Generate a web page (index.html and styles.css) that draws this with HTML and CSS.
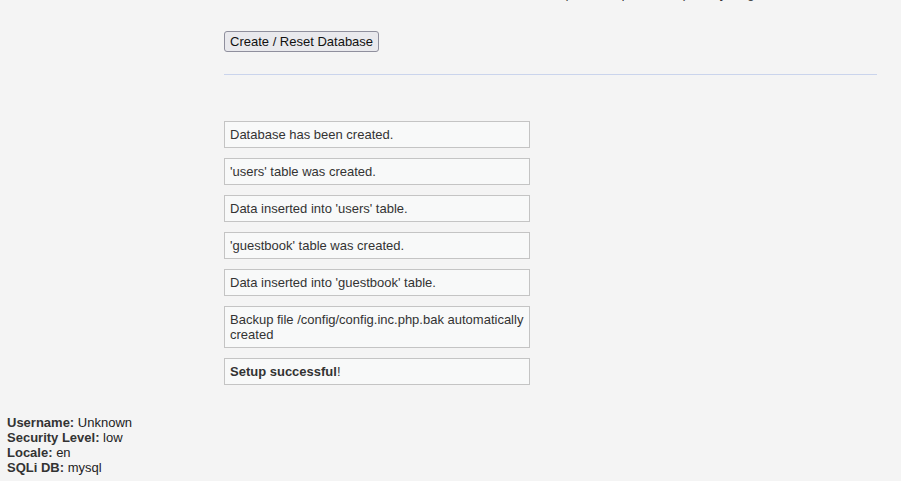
FILE: index.html
```html
<!DOCTYPE html>
<html>
<head>
<meta charset="utf-8">
<link rel="stylesheet" href="styles.css">
</head>
<body>
<div class="page">
  <div class="main">
    <p class="intro">You can also use this to reset the administrator credentials ("<em>admin</em> // <em>password</em>") at any stage.</p>
    <form class="form">
      <button type="button" class="btn">Create / Reset Database</button>
    </form>
    <hr class="rule">
    <div class="messages">
      <div class="message">Database has been created.</div>
      <div class="message">'users' table was created.</div>
      <div class="message">Data inserted into 'users' table.</div>
      <div class="message">'guestbook' table was created.</div>
      <div class="message">Data inserted into 'guestbook' table.</div>
      <div class="message">Backup file /config/config.inc.php.bak automatically created</div>
      <div class="message"><strong>Setup successful</strong>!</div>
    </div>
  </div>
  <div class="footer">
    <div><strong>Username:</strong> Unknown</div>
    <div><strong>Security Level:</strong> low</div>
    <div><strong>Locale:</strong> en</div>
    <div><strong>SQLi DB:</strong> mysql</div>
  </div>
</div>
</body>
</html>
```
FILE: styles.css
```css
html, body {
  margin: 0;
  padding: 0;
  background: #f4f4f4;
}
body {
  font-family: "Liberation Sans", Arial, sans-serif;
  font-size: 13px;
  line-height: 15px;
  color: #2f2f2f;
  overflow: hidden;
  height: 481px;
}
.page {
  display: flex;
  flex-direction: column;
}
.main {
  margin-left: 224px;
  width: 653px;
}
.intro {
  margin: -14px 0 0 0;
  white-space: nowrap;
  color: #333;
  font-size: 13px;
  line-height: 15px;
}
.form {
  margin: 30px 0 0 0;
}
.btn {
  font-family: "Liberation Sans", Arial, sans-serif;
  font-size: 13px;
  height: 21px;
  padding: 0 5px;
  border: 1px solid #8f8f9d;
  border-radius: 3px;
  background: #e9e9ed;
  color: #111;
  line-height: 19px;
  display: block;
}
.rule {
  margin: 22px 0 0 0;
  border: 0;
  height: 1px;
  background: #cad4ec;
}
.messages {
  margin-top: 46px;
  display: flex;
  flex-direction: column;
  gap: 10px;
}
.message {
  width: 294px;
  padding: 5px;
  border: 1px solid #c4c4c4;
  background: #f8f9f9;
  color: #333;
  line-height: 15px;
}
.footer {
  margin: 30px 0 0 7px;
  color: #222;
  line-height: 15px;
}
.footer strong {
  color: #333;
}
```
